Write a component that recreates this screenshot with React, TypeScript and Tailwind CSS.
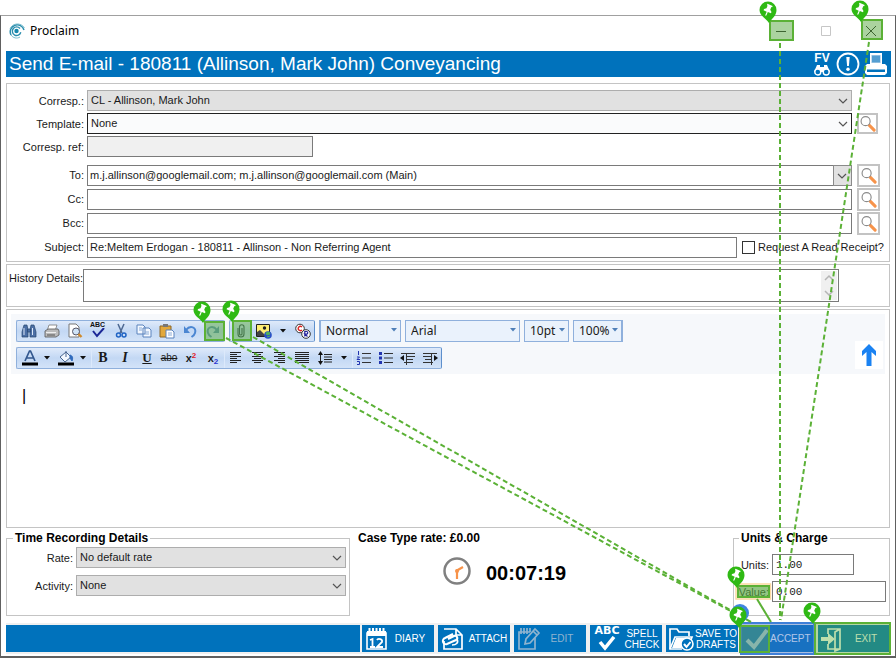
import React from "react";

type Children = { children?: React.ReactNode };

function Chevron({ className = "" }: { className?: string }) {
  return (
    <svg viewBox="0 0 10 6" className={`pointer-events-none absolute h-[6px] w-[10px] ${className}`}>
      <path d="M1 1l4 4 4-4" fill="none" stroke="#555" strokeWidth="1.2" />
    </svg>
  );
}

function DropDown({ id, value, className }: { id: string; value: string; className: string }) {
  return (
    <div className="relative min-w-0 flex-1">
      <select
        id={id}
        defaultValue={value}
        className={`block h-[21px] w-full appearance-none border pl-[3px] text-[11px] leading-[19px] outline-none ${className}`}
      >
        <option>{value}</option>
      </select>
      <Chevron className="right-[4px] top-[8px]" />
    </div>
  );
}

function SearchButton({ label, small = false }: { label: string; small?: boolean }) {
  return (
    <div className="flex w-[23px] shrink-0">
      <button
        aria-label={label}
        className={`flex items-center justify-center border-2 border-[#c3c3c3] bg-white ${small ? "size-[21px]" : "size-[23px]"}`}
      >
        <svg viewBox="0 0 18 18" className="size-[17px] shrink-0">
          <path d="M11 11l5 5" stroke="#f7934a" strokeWidth="3.2" strokeLinecap="round" />
          <circle cx="7" cy="6.5" r="4.8" fill="#fff" stroke="#8a8a8a" strokeWidth="1.2" />
        </svg>
      </button>
    </div>
  );
}

function FieldRow({ id, label, tall = false, children }: Children & { id: string; label: string; tall?: boolean }) {
  return (
    <div className={`flex items-center gap-[5px] pr-[9px] ${tall ? "h-6" : "h-[23px]"}`}>
      <label htmlFor={id} className="-mr-[2px] w-[77px] shrink-0 whitespace-nowrap text-right">
        {label}
      </label>
      {children}
    </div>
  );
}

const textBox = "h-[21px] border border-[#7a7a7a] px-[2px] text-[11px] outline-none";

function Tool({ label, wide = false, children }: Children & { label: string; wide?: boolean }) {
  return (
    <button aria-label={label} className={`flex h-full shrink-0 items-center justify-center ${wide ? "w-[23px]" : "w-[22px]"}`}>
      <svg viewBox="0 0 16 16" className="size-4">
        {children}
      </svg>
    </button>
  );
}

function ColourTool({ label, children }: Children & { label: string }) {
  return (
    <button aria-label={label} className="flex h-full w-[36px] shrink-0 items-center gap-[6px] pl-[5px]">
      <svg viewBox="0 0 16 16" className="size-4 shrink-0">
        {children}
      </svg>
      <MenuArrow />
    </button>
  );
}

function MenuArrow({ className = "" }: { className?: string }) {
  return (
    <svg viewBox="0 0 6 4" className={`h-[4px] w-[6px] shrink-0 ${className}`}>
      <path d="M0 0h6l-3 3.5z" fill="#111" />
    </svg>
  );
}

const toolGroup =
  "flex h-[22px] items-center rounded-[2px] border border-[#8fb0dc] border-r-[#5d8fcc] bg-linear-to-b from-[#dfeafa] via-[#c3d8f4] to-[#d3e3f8]";

function ToolSelect({ label, value, className }: { label: string; value: string; className: string }) {
  return (
    <div className={`relative shrink-0 ${className}`}>
      <select
        aria-label={label}
        defaultValue={value}
        className="block h-[22px] w-full appearance-none border border-[#8fb0dc] bg-[#eaf2fc] pl-[5px] font-['Noto_Sans',sans-serif] text-[12px] leading-[20px] outline-none"
      >
        <option>{value}</option>
      </select>
      <svg viewBox="0 0 6 4" className="pointer-events-none absolute right-[4px] top-[8px] h-[4px] w-[6px]">
        <path d="M0 0h6l-3 3.5z" fill="#4f7fb8" />
      </svg>
    </div>
  );
}

function TextLines({ rows }: { rows: number[][] }) {
  return (
    <>
      {rows.map(([x1, x2], i) => (
        <path key={i} d={`M${x1} ${2.5 + i * 2}H${x2}`} stroke="#222" strokeWidth="1" />
      ))}
    </>
  );
}

function ActionButton({ icon, dim = false, snug = false, children }: Children & { icon: React.ReactNode; dim?: boolean; snug?: boolean }) {
  return (
    <button
      className={`flex h-[27px] w-[72px] shrink-0 items-center bg-[#0072bc] pl-[2px] text-[10px] leading-[11px] ${dim ? "text-[#8fb4cf]" : "text-white"} ${snug ? "" : "pr-[4px]"}`}
    >
      <svg viewBox="0 0 26 26" className="size-[26px] shrink-0" fill="none" stroke="currentColor">
        {icon}
      </svg>
      <span className="flex-1 text-center">{children}</span>
    </button>
  );
}

function Pin({ x, y }: { x: number; y: number }) {
  return (
    <g transform={`translate(${x} ${y})`}>
      <path d="M1 13C-2 8-8.500 6-8.500 0A8.500 8.500 0 0 1 8.500 0C8.500 6 4 8 1 13z" fill="#2fb914" />
      <path
        transform="rotate(22)"
        d="M-2.800-5.500h5.600v1.500h-.8v3l2 1.600v1.400H.6V5.500L0 6.500-.6 5.500V2H-4V.6l2-1.600v-3h-.8z"
        fill="#fff"
      />
    </g>
  );
}

const marks = [
  [770, 21, 23, 19],
  [862, 20, 20, 19],
  [205, 322, 19, 18],
  [233, 321, 18, 19],
];

const pins = [
  [768, 10],
  [860, 9],
  [202, 310],
  [231, 309],
  [736, 575],
  [738, 615],
  [812, 611],
];

function Annotations() {
  return (
    <svg viewBox="0 0 896 658" className="pointer-events-none absolute left-0 top-0 h-[658px] w-[896px]">
      {marks.map(([x, y, w, h]) => (
        <rect key={`${x}-${y}`} x={x} y={y} width={w} height={h} fill="#57a83f" fillOpacity=".5" stroke="#5bb136" strokeWidth="2" />
      ))}
      <rect x="736" y="584" width="34.500" height="15" fill="none" stroke="#fbd9a0" strokeWidth="1.500" />
      <rect x="738" y="586" width="31" height="11" fill="#57a83f" fillOpacity=".65" stroke="#5bb136" strokeWidth="2" />
      <rect x="741" y="623" width="73" height="31" fill="#3b70c8" fillOpacity=".4" stroke="#3f7fd8" strokeWidth="2" />
      <rect x="740" y="626" width="29" height="26" fill="#57a060" fillOpacity=".45" stroke="#5bb136" strokeWidth="2" />
      <rect x="815" y="623" width="75" height="31" fill="#57b02f" fillOpacity=".4" stroke="#5bb136" strokeWidth="2" />
      <g stroke="#5bb136" strokeWidth="2" fill="none">
        <path strokeDasharray="5 3" d="M780 43V620M869 42L781 620M226 338L751 622M253 337L751 622" />
        <path d="M757 599L771 622" />
      </g>
      <circle cx="740" cy="613" r="9" fill="#3f86e0" />
      {pins.map(([x, y]) => (
        <Pin key={`${x}-${y}`} x={x} y={y} />
      ))}
    </svg>
  );
}

export default function App() {
  return (
    <div className="relative flex min-h-screen flex-col bg-white pt-[15px] font-['Liberation_Sans',Arial,sans-serif] text-[11px] leading-[14px] text-[#1a1a1a]">
      <div className="flex flex-1 flex-col border border-t-[#a0a0a0] border-b-2 border-[#606060] pb-[2px]">
        <header className="flex h-[35px] items-center gap-[5px] pb-[5px] pl-2 font-['Noto_Sans',sans-serif] text-[12px] text-black">
          <svg viewBox="0 0 16 16" className="size-4" fill="none" stroke="#2b8eae">
            <circle cx="7.500" cy="8" r="2.200" fill="#1687ad" stroke="none" />
            <path d="M11 5.500a4.300 4.300 0 1 0 .8 3.800" strokeWidth="1.400" />
            <path d="M2 12A7 7 0 1 1 15 7" strokeWidth="1.500" />
            <path d="M1 6C3 0 12-1 15.500 5M2 12c2 3 6 4 9 2" strokeWidth="1" stroke="#7bbdce" />
          </svg>
          <span className="flex-1">Proclaim</span>
          <div className="flex gap-[23px] pr-[13px]">
            <button aria-label="Minimise" className="flex size-[22px] items-center justify-center">
              <svg viewBox="0 0 12 12" className="size-3"><path d="M1 6.500h10" stroke="#222" /></svg>
            </button>
            <button aria-label="Maximise" className="flex size-[22px] items-center justify-center">
              <svg viewBox="0 0 12 12" className="size-3"><path d="M1.500 1.500h9v9h-9z" fill="none" stroke="#c6c6c6" /></svg>
            </button>
            <button aria-label="Close" className="flex size-[22px] items-center justify-center">
              <svg viewBox="0 0 12 12" className="size-3"><path d="M1 1l10 10M11 1L1 11" stroke="#222" /></svg>
            </button>
          </div>
        </header>

        <div className="ml-[5px] mr-[4px] flex h-[26px] items-center bg-[#0072bc] px-[3px] text-white">
          <h1 className="flex-1 whitespace-nowrap text-[19px] leading-[26px]">Send E-mail - 180811 (Allinson, Mark John) Conveyancing</h1>
          <div className="flex items-center gap-[4px]">
            <button aria-label="File view search" className="flex w-[20px] flex-col items-center text-[12px] font-bold leading-[12px]">
              <span>FV</span>
              <svg viewBox="0 0 16 12" className="h-[12px] w-[16px]" fill="#fff">
                <path d="M3 1h3v2h4V1h3l3 7H0z" />
                <circle cx="3.800" cy="8" r="3" fill="#0072bc" stroke="#fff" strokeWidth="1.400" />
                <circle cx="12.200" cy="8" r="3" fill="#0072bc" stroke="#fff" strokeWidth="1.400" />
              </svg>
            </button>
            <button aria-label="Important">
              <svg viewBox="0 0 24 24" className="size-6" fill="none" stroke="#fff" strokeWidth="1.800">
                <circle cx="12" cy="12" r="10.500" />
                <path d="M10.300 5h3.400l-.8 9h-1.800z" fill="#fff" stroke="none" />
                <circle cx="12" cy="17.300" r="1.700" fill="#fff" stroke="none" />
              </svg>
            </button>
            <button aria-label="Print">
              <svg viewBox="0 0 24 24" className="size-6" fill="#fff">
                <path d="M6 1h12v11H6z" />
                <path d="M7.500 3h9v8h-9z" fill="#8dbde0" />
                <path d="M8 5h8M8 7h8M8 9h8" stroke="#0072bc" strokeWidth=".8" />
                <path d="M3 12h18l2 2v7l-2 2H3l-2-2v-7z" />
                <path d="M3 17.500h18v2.500H3z" fill="#0072bc" />
              </svg>
            </button>
          </div>
        </div>

        <section className="mx-[5px] mt-[6px] border border-[#c4c4c4] pb-[2px] pt-[5px]">
          <FieldRow id="corresp" label="Corresp.:">
            <DropDown id="corresp" value="CL - Allinson, Mark John" className="border-[#adadad] bg-[#e1e1e1]" />
            <div className="w-[23px] shrink-0" />
          </FieldRow>
          <FieldRow id="template" label="Template:">
            <DropDown id="template" value="None" className="border-[#222] bg-[#fafbfc]" />
            <SearchButton label="Find template" small />
          </FieldRow>
          <FieldRow id="ref" label="Corresp. ref:">
            <input id="ref" readOnly className={`${textBox} w-[226px] bg-[#f0f0f0]`} />
          </FieldRow>
          <div className="mt-[5px]">
            <FieldRow id="to" label="To:" tall>
              <div className="relative flex flex-1">
                <input
                  id="to"
                  defaultValue="m.j.allinson@googlemail.com; m.j.allinson@googlemail.com (Main)"
                  className={`${textBox} w-full bg-white`}
                />
                <button aria-label="Show recipients" className="relative -ml-px h-[21px] w-[19px] shrink-0 border border-[#8a8a8a] bg-[#e1e1e1]">
                  <Chevron className="right-[4px] top-[7px]" />
                </button>
              </div>
              <SearchButton label="Find To recipient" />
            </FieldRow>
            <FieldRow id="cc" label="Cc:" tall>
              <input id="cc" className={`${textBox} min-w-0 flex-1 bg-white`} />
              <SearchButton label="Find Cc recipient" />
            </FieldRow>
            <FieldRow id="bcc" label="Bcc:" tall>
              <input id="bcc" className={`${textBox} min-w-0 flex-1 bg-white`} />
              <SearchButton label="Find Bcc recipient" />
            </FieldRow>
            <FieldRow id="subject" label="Subject:" tall>
              <input id="subject" defaultValue="Re:Meltem Erdogan - 180811 - Allinson - Non Referring Agent" className={`${textBox} min-w-0 flex-1 bg-white`} />
              <label className="-mr-[4px] flex items-center gap-[3px] whitespace-nowrap">
                <input type="checkbox" className="size-[13px] appearance-none border border-[#333] bg-white" />
                Request A Read Receipt?
              </label>
            </FieldRow>
          </div>
        </section>

        <section className="mx-[5px] mt-[2px] flex items-start border border-[#c4c4c4] py-[4px]">
          <label htmlFor="history" className="w-[76px] shrink-0 whitespace-nowrap pt-[2px] text-right">
            History Details:
          </label>
          <div className="relative mr-[50px] flex-1">
            <textarea id="history" className="block h-[33px] w-full resize-none border border-[#7a7a7a] px-[2px] outline-none" />
            <div className="absolute right-[2px] top-[2px] h-[29px] w-[16px] bg-[#f0f0f0]">
              <svg viewBox="0 0 16 29" fill="none" stroke="#b5b5b5" strokeWidth="1.500">
                <path d="M4 9l4-4 4 4M4 20l4 4 4-4" />
              </svg>
            </div>
          </div>
        </section>

        <section className="mx-[5px] mt-[2px] flex flex-1 flex-col border border-[#c4c4c4] p-[4px]">
          <div className="flex items-end bg-[#f6f8fb] pb-[5px] pl-[5px] pr-[2px] pt-[6px]">
            <div className="flex flex-1 flex-col gap-[5px]">
              <div className="flex items-center gap-[4px]">
                <div className={toolGroup}>
                  <Tool label="Find" wide>
                    <g fill="#4c6fa5" stroke="#27466f" strokeWidth=".7">
                      <path d="M3 2h3l1 5v7H1V9zM10 2h3l2 7v5H9V7z" /><path d="M6.500 6h3v3h-3z" />
                    </g>
                    <path d="M3 5v7M11.500 5v7" stroke="#dce8f8" />
                  </Tool>
                  <Tool label="Print" wide>
                    <path d="M5 2l8 0-2 6H3z" fill="#fff" stroke="#777" strokeWidth=".8" />
                    <path d="M1 8l3-2h10l1 2v4l-3 2H1z" fill="#bbb" stroke="#555" strokeWidth=".8" />
                    <path d="M2 9.500h10" stroke="#eee" /><path d="M3 12h8" stroke="#555" />
                  </Tool>
                  <Tool label="Print preview" wide>
                    <path d="M2 1h7l3 3v10H2z" fill="#fff" stroke="#777" />
                    <circle cx="9" cy="8.500" r="3.500" fill="#cfe3f7" stroke="#556" />
                    <path d="M11.500 11l3 3" stroke="#d08a2c" strokeWidth="2.400" />
                  </Tool>
                  <button aria-label="Check spelling" className="flex h-full w-[23px] shrink-0 flex-col items-center text-[7px] font-bold leading-[7px] text-[#111]">
                    <span>ABC</span>
                    <svg viewBox="0 0 14 10" className="h-[10px] w-[14px]"><path d="M2 3l4 5 7-8" fill="none" stroke="#1b2796" strokeWidth="2" /></svg>
                  </button>
                  <Tool label="Cut" wide>
                    <path d="M5 1l4 9M11 1L7 10" stroke="#4d6892" strokeWidth="1.500" />
                    <circle cx="5.500" cy="12" r="2" fill="none" stroke="#1f63c4" strokeWidth="1.500" />
                    <circle cx="11" cy="12" r="2" fill="none" stroke="#1f63c4" strokeWidth="1.500" />
                  </Tool>
                  <Tool label="Copy" wide>
                    <path d="M1 2h6l2 2v7H1zM7 5h6l2 2v7H7z" fill="#f3f8ff" stroke="#5b83bd" />
                    <path d="M3 5h3M3 7h3M9 9h4M9 11h4" stroke="#8aaad6" />
                  </Tool>
                  <Tool label="Paste" wide>
                    <path d="M1 3h11v11H1z" fill="#e2a83c" stroke="#8c6726" /><path d="M4 1h5v3H4z" fill="#777" />
                    <path d="M7 7h6l2 2v6H7z" fill="#fff" stroke="#5b83bd" /><path d="M9 10h4M9 12h4" stroke="#8aaad6" />
                  </Tool>
                  <Tool label="Undo" wide>
                    <path d="M4 7c4-5 11-3 9 3-.5 2-2 3-3.500 4" fill="none" stroke="#4b86d2" strokeWidth="2" /><path d="M2 3v7h6z" fill="#4b86d2" />
                  </Tool>
                  <Tool label="Redo" wide>
                    <path d="M12 7C8 2 1 4 3 10c.5 2 2 3 3.500 4" fill="none" stroke="#5d91b8" strokeWidth="2" /><path d="M14 3v7H8z" fill="#5d91b8" />
                  </Tool>
                </div>
                <div className={toolGroup}>
                  <Tool label="Attach file">
                    <path d="M5 5v6a3 3 0 0 0 6 0V4a2 2 0 0 0-4.500 0v7a1.300 1.300 0 0 0 2.500 0V5" fill="none" stroke="#345" strokeWidth="1.100" />
                  </Tool>
                  <Tool label="Insert picture" wide>
                    <path d="M.5 1.500h13v12H.5z" fill="#ffee73" stroke="#222" /><circle cx="8.500" cy="5" r="1.700" fill="#222" />
                    <path d="M1 13V9l3-2 5 5v1z" fill="#444" /><circle cx="12" cy="12" r="3.800" fill="#2950c8" />
                    <path d="M10 10l3-1 1 2-3 1zM11 14l3-1" fill="#4fb35a" stroke="#4fb35a" />
                  </Tool>
                  <MenuArrow className="mx-[5px]" />
                  <Tool label="Insert symbol" wide>
                    <circle cx="5" cy="5.500" r="4.300" fill="#fff" stroke="#333" /><path d="M7 4a2.200 2.200 0 1 0 0 3" fill="none" stroke="#d22" strokeWidth="1.400" />
                    <circle cx="11" cy="11" r="4.300" fill="#fff" stroke="#333" /><path d="M9.800 13.500v-5h1.700a1.200 1.200 0 0 1 0 2.600H9.800l2.700 2.400" fill="none" stroke="#229" strokeWidth="1.200" />
                  </Tool>
                </div>
                <div className="flex items-center gap-[4px] border-x border-[#8fb0dc]">
                  <ToolSelect label="Style" value="Normal" className="w-[81px]" />
                  <ToolSelect label="Font" value="Arial" className="w-[115px]" />
                  <ToolSelect label="Size" value="10pt" className="w-[45px]" />
                  <ToolSelect label="Zoom" value="100%" className="w-[49px]" />
                </div>
              </div>
              <div className="flex">
                <div className={toolGroup}>
                  <ColourTool label="Text colour">
                    <path d="M3 11L7.500 1h1L13 11M5 8h6" fill="none" stroke="#33588f" strokeWidth="1.700" /><path d="M0 12.500h16v3H0z" />
                  </ColourTool>
                  <ColourTool label="Fill colour">
                    <path d="M2 7l6-5 5 5-6 5z" fill="#f3f8ff" stroke="#48658f" /><path d="M8 1v6" stroke="#48658f" />
                    <path d="M12 5c3 1 3 3 2 6l-2-3z" fill="#2f6bbd" stroke="#2f6bbd" /><path d="M0 12.500h16v3H0z" />
                  </ColourTool>
                  <div className="ml-[2px] flex h-full items-center border-l border-[#dce9fb]">
                    <button className="h-full w-[22px] font-['Liberation_Serif',serif] text-[14px] font-bold">B</button>
                    <button className="h-full w-[22px] font-['Liberation_Serif',serif] text-[14px] font-bold italic">I</button>
                    <button className="h-full w-[22px] font-['Liberation_Serif',serif] text-[13px] font-bold underline">U</button>
                    <button className="h-full w-[22px] text-[10px] line-through">abo</button>
                    <button className="h-full w-[22px] text-[11px] font-bold">x<sup className="text-[8px] text-[#e0202a]">2</sup></button>
                    <button className="h-full w-[22px] text-[11px] font-bold">x<sub className="text-[8px] text-[#2b34d0]">2</sub></button>
                  </div>
                  <div className="flex h-full items-center border-l border-[#dce9fb]">
                    <Tool label="Align left"><TextLines rows={[[2, 13], [2, 9], [2, 13], [2, 9], [2, 13], [2, 9]]} /></Tool>
                    <Tool label="Centre"><TextLines rows={[[2, 13], [4, 11], [2, 13], [4, 11], [2, 13], [4, 11]]} /></Tool>
                    <Tool label="Align right"><TextLines rows={[[2, 13], [6, 13], [2, 13], [6, 13], [2, 13], [6, 13]]} /></Tool>
                    <Tool label="Justify"><TextLines rows={[[1, 15], [1, 15], [1, 15], [1, 15], [1, 15], [1, 15]]} /></Tool>
                    <Tool label="Line spacing" wide>
                      <path d="M3.500 3v10M7 4.500h8M7 7h8M7 9.500h8M7 12h8" stroke="#222" /><path d="M1 5l2.500-4L6 5zM1 11l2.500 4L6 11z" fill="#111" />
                    </Tool>
                    <MenuArrow className="mx-[5px]" />
                  </div>
                  <div className="flex h-full items-center border-l border-[#dce9fb]">
                    <Tool label="Numbered list"><path d="M6 3.500h9M6 8h9M6 12.500h9" stroke="#333" /><path d="M2.500 1v4M1 7h2.500L1 9.500h3M1 11.500h2.500v3H1" fill="none" stroke="#2234b0" /></Tool>
                    <Tool label="Bulleted list"><path d="M6 3.500h9M6 8h9M6 12.500h9" stroke="#333" /><path d="M1 2h3v3H1zM1 6.500h3v3H1zM1 11h3v3H1z" fill="#2234b0" /></Tool>
                    <Tool label="Decrease indent"><path d="M1 3.500h14M7 6.500h8M7 9.500h6M4 12.500h9M6.500 3v12" stroke="#333" /><path d="M4 5L0 8l4 3z" fill="#111" /></Tool>
                    <Tool label="Increase indent"><path d="M1 3.500h14M1 6.500h8M3 9.500h6M1 12.500h10M9.500 3v12" stroke="#333" /><path d="M12 5l4 3-4 3z" fill="#111" /></Tool>
                  </div>
                </div>
              </div>
            </div>
            <button aria-label="Scroll to top" className="flex size-7 items-center justify-center bg-white">
              <svg viewBox="0 0 16 24" className="h-6 w-4 shrink-0"><path d="M5.500 23V9L1 13V8l7-7 7 7v5l-4.500-4v14z" fill="#1a82f2" /></svg>
            </button>
          </div>
          <textarea aria-label="Message" defaultValue="|" className="w-full flex-1 resize-none px-[11px] pt-[13px] text-[16px] leading-[18px] text-black outline-none" />
        </section>

        <div className="mx-[5px] mt-[2px] flex h-[86px]">
          <fieldset className="w-[344px] min-w-0 shrink-0 border border-[#c4c4c4]">
            <legend className="ml-[6px] px-[2px] text-[12px] font-bold leading-[16px] text-black">Time Recording Details</legend>
            <div className="flex flex-col gap-[7px] pr-[3px] pt-[1px]">
              <div className="flex items-center gap-[3px]">
                <label htmlFor="rate" className="w-[66px] text-right">Rate:</label>
                <DropDown id="rate" value="No default rate" className="border-[#adadad] bg-[#e1e1e1]" />
              </div>
              <div className="flex items-center gap-[3px]">
                <label htmlFor="activity" className="w-[66px] text-right">Activity:</label>
                <DropDown id="activity" value="None" className="border-[#adadad] bg-[#e1e1e1]" />
              </div>
            </div>
          </fieldset>
          <div className="flex flex-1 flex-col pl-[8px] text-black">
            <p className="text-[12px] font-bold leading-[16px]">Case Type rate: £0.00</p>
            <div className="flex items-center gap-[14px] pl-[84px] pt-[10px]">
              <svg viewBox="0 0 30 30" className="size-[30px]" fill="none">
                <circle cx="15" cy="15" r="12.500" stroke="#808080" strokeWidth="2.500" />
                <path d="M15 23v-8.500l6-3.500" stroke="#f7934a" strokeWidth="2.200" /><circle cx="15" cy="15" r="2" fill="#f7934a" />
              </svg>
              <span className="pt-[3px] text-[20px] font-bold leading-[24px]">00:07:19</span>
            </div>
          </div>
          <fieldset className="w-[157px] min-w-0 shrink-0 border border-[#c4c4c4]">
            <legend className="ml-[5px] px-[2px] text-[12px] font-bold leading-[16px] text-black">Units &amp; Charge</legend>
            <div className="flex flex-col gap-[6px] pr-[3px] pt-[8px]">
              <div className="flex items-center gap-[3px]">
                <label htmlFor="units" className="w-[35px] shrink-0 text-right">Units:</label>
                <input id="units" defaultValue="1.00" className="h-[21px] w-[82px] border border-[#7a7a7a] px-[3px] font-['Liberation_Mono',monospace] text-[11px] outline-none" />
              </div>
              <div className="flex items-center gap-[3px]">
                <label htmlFor="value" className="w-[35px] shrink-0 text-right">Value:</label>
                <input id="value" defaultValue="0.00" className="h-[21px] min-w-0 flex-1 border border-[#7a7a7a] px-[3px] font-['Liberation_Mono',monospace] text-[11px] outline-none" />
              </div>
            </div>
          </fieldset>
        </div>

        <footer className="ml-[5px] mr-[5px] mt-[7px] flex gap-[4px] bg-[#f0f0f0] py-[2px]">
          <div className="-mr-[2px] flex-1 bg-[#0072bc]" />
          <ActionButton icon={<><path d="M3 7h19v16H3z" strokeWidth="1.600" /><path d="M3 5h19v5H3z" fill="currentColor" stroke="none" /><path d="M5.500 2v6M9 2v6M12.500 2v6M16 2v6M19.500 2v6" strokeWidth="2" /><path d="M6 14l2.500-1v8M6 21h5M13 14c1-2 6-1 5 2l-5 5h6" strokeWidth="1.800" /></>}>
            DIARY
          </ActionButton>
          <ActionButton snug icon={<><path d="M4 3h12l6 6v14H4V15M16 3v6h6" strokeWidth="1.700" /><path d="M13 8l-8 4a3 3 0 0 0 2 6l9-4a2 2 0 0 0-2-4l-6 3" strokeWidth="2" /><path d="M12 19c4 0 7-2 5-6" strokeWidth="1.600" /></>}>
            ATTACH
          </ActionButton>
          <ActionButton dim icon={<><path d="M19 12v11H3V6h11" strokeWidth="1.700" /><path d="M5 2v6M8 2v6M11 2v6M14 2v4" strokeWidth="1.700" /><path d="M9 18l1-5L19 3l4 4-9 10z" strokeWidth="1.700" /><path d="M17 5l4 4" strokeWidth="1.700" /></>}>
            EDIT
          </ActionButton>
          <button className="relative flex h-[27px] w-[72px] shrink-0 items-center bg-[#0072bc] text-[10px] leading-[11px] text-white">
            <span className="flex w-[32px] flex-col items-center pl-[2px] font-['DejaVu_Sans',sans-serif] text-[11px] font-bold leading-[10px]">
              ABC
              <svg viewBox="0 0 18 15" className="h-[15px] w-[18px]"><path d="M2 6l5 6 9-11" fill="none" stroke="#fff" strokeWidth="3.500" /></svg>
            </span>
            <span className="flex-1 text-center">SPELL CHECK</span>
          </button>
          <ActionButton snug icon={<><path d="M14 23H2V3h7l2 3h10v4" strokeWidth="1.700" /><path d="M2 23l5-12h17l-2 5" strokeWidth="1.700" /><path d="M4 22l4-10h14l-2 4-7 6z" fill="currentColor" stroke="none" /><circle cx="19" cy="18" r="6" fill="#0072bc" strokeWidth="1.600" /><path d="M16 18l2.500 3 4-5" strokeWidth="2" /></>}>
            <span className="block whitespace-nowrap">SAVE TO</span>DRAFTS
          </ActionButton>
          <ActionButton icon={<path d="M3 14l7 7L23 4" strokeWidth="4" />}>
            ACCEPT
          </ActionButton>
          <ActionButton icon={<><path d="M8 8V3h12v20H8v-5M20 3l-5 3v19l5-2" strokeWidth="1.700" /><path d="M1 11h7V7l7 6-7 6v-4H1z" fill="currentColor" stroke="none" /></>}>
            EXIT
          </ActionButton>
        </footer>
      </div>
      <Annotations />
    </div>
  );
}
